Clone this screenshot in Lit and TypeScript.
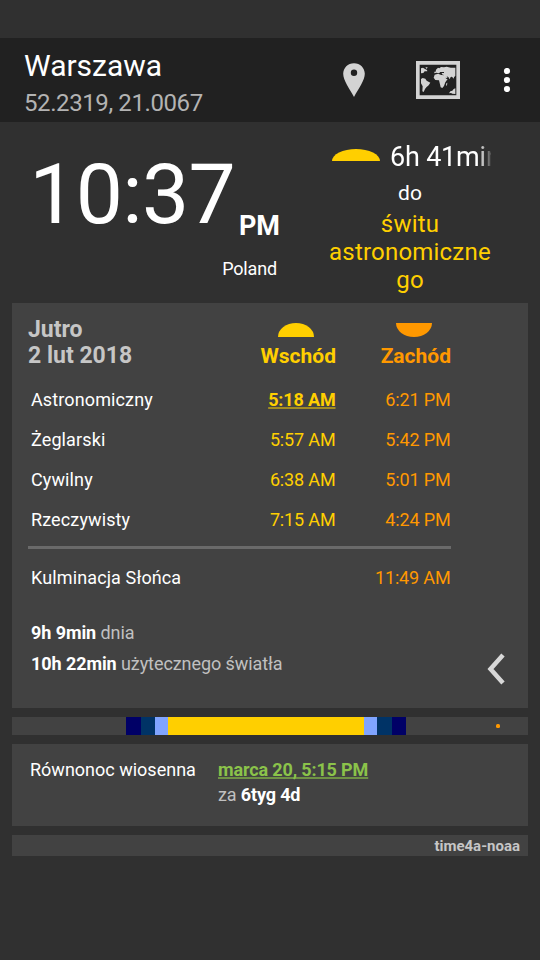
import { LitElement, html, css } from "lit";
import { customElement } from "lit/decorators.js";

const TWILIGHTS = [
  { name: "Astronomiczny", rise: "5:18 AM", set: "6:21 PM", next: true },
  { name: "Żeglarski", rise: "5:57 AM", set: "5:42 PM", next: false },
  { name: "Cywilny", rise: "6:38 AM", set: "5:01 PM", next: false },
  { name: "Rzeczywisty", rise: "7:15 AM", set: "4:24 PM", next: false },
];

const DAY_BANDS = [
  { width: 114, color: "transparent" },
  { width: 15, color: "#000066" },
  { width: 14, color: "#003366" },
  { width: 13, color: "#80a4ff" },
  { width: 196, color: "#ffcf00" },
  { width: 13, color: "#80a4ff" },
  { width: 15, color: "#003366" },
  { width: 14, color: "#000066" },
];

@customElement("app-root")
export class AppRoot extends LitElement {
  static styles = css`
    :host {
      display: flex;
      flex-direction: column;
      width: 540px;
      height: 960px;
      box-sizing: border-box;
      padding-top: 38px;
      background: #303030;
      color: #fff;
      font-family: Roboto, sans-serif;
      font-size: 18px;
      overflow: hidden;
    }
    svg { display: block; flex: none; }
    .header {
      display: flex;
      height: 84px;
      background: #212121;
      box-sizing: border-box;
      padding: 9px 29px 0 24px;
    }
    .place { flex: 1; }
    .city { font-size: 30px; line-height: 38px; }
    .coords { font-size: 24px; line-height: 36px; color: #b3b3b3; letter-spacing: -0.4px; }
    .actions { display: flex; height: 66px; align-items: center; }
    .pin { margin-right: 51px; }
    .map { margin-right: 43px; }
    .now { display: flex; height: 181px; }
    .clock { width: 280px; padding-top: 21px; box-sizing: border-box; }
    .time-line { display: flex; justify-content: flex-end; height: 102px; }
    .time { font-size: 84px; line-height: 103px; letter-spacing: -0.7px; }
    .ampm { font-size: 27px; font-weight: 700; line-height: 32px; margin: 67px 0 0 4px; }
    .zone { text-align: right; padding-right: 3px; margin-top: 14px; line-height: 20px; letter-spacing: -0.15px; }
    .countdown { margin-left: 49px; width: 162px; padding-top: 18px; text-align: center; }
    .left { display: flex; align-items: flex-start; height: 34px; padding-left: 3px; }
    .left svg { margin: 9px 10px 0 0; }
    .remaining {
      font-size: 27px;
      line-height: 35px;
      flex: 1;
      min-width: 0;
      overflow: hidden;
      white-space: nowrap;
      text-align: left;
      letter-spacing: -0.2px;
      mask-image: linear-gradient(to right, #000 calc(100% - 13px), rgba(0, 0, 0, 0.15));
    }
    .until { font-size: 21px; line-height: 38px; height: 36px; }
    .event { font-size: 24px; line-height: 28px; color: #ffcf00; overflow-wrap: anywhere; letter-spacing: 0.2px; }
    .card { background: #424242; margin: 0 12px 9px; box-sizing: border-box; }
    .sun { height: 405px; flex: none; padding: 13px 19px 0 16px; display: flex; flex-direction: column; }
    .table {
      display: grid;
      grid-template-columns: 1fr 110px 115px;
      width: 423px;
      text-align: right;
    }
    .date { font-size: 23px; font-weight: 700; line-height: 26px; color: #c6c6c6; text-align: left; height: 63px; padding-top: 1px; }
    .col { font-size: 21px; font-weight: 700; line-height: 26px; display: flex; flex-direction: column; align-items: flex-end; }
    .col svg { margin: 7px 22px 6px 0; }
    .col.down svg { margin-right: 19px; }
    .up { color: #ffcf00; }
    .down { color: #ff9800; }
    .name { text-align: left; padding-left: 3px; letter-spacing: 0.12px; }
    .cell { line-height: 40px; }
    .time-cell { letter-spacing: -0.15px; padding-right: 0.5px; }
    .next { font-weight: 700; }
    .next span { text-decoration: underline 2px #a18b22; text-underline-offset: 1px; text-decoration-skip-ink: none; }
    .rule { width: 423px; height: 3px; background: #6a6a6a; margin: 6px 0 9px; }
    .foot { display: flex; justify-content: space-between; padding: 15px 4px 0 3px; }
    .sums { line-height: 31px; color: #c0c0c0; margin-top: 4px; letter-spacing: -0.08px; }
    b { color: #fff; }
    .chev { margin-top: 40px; }
    .timeline { display: flex; height: 18px; flex: none; position: relative; }
    .dot { position: absolute; left: 484px; top: 7px; width: 4px; height: 4px; border-radius: 1.5px; background: #ff9800; }
    .season { display: flex; height: 82px; flex: none; padding: 13px 18px; line-height: 25px; color: #c0c0c0; }
    .season-name { width: 188px; color: #fff; }
    .season-when { letter-spacing: -0.14px; }
    .link { color: #8bc34a; font-weight: 700; text-decoration: underline 2px #6f9245; text-underline-offset: 1px; text-decoration-skip-ink: none; }
    .source { height: 21px; flex: none; padding-right: 8px; text-align: right; font-size: 15px; font-weight: 700; line-height: 22px; color: #c6c6c6; }
  `;

  render() {
    return html`
      <div class="header">
        <div class="place">
          <div class="city">Warszawa</div>
          <div class="coords">52.2319, 21.0067</div>
        </div>
        <div class="actions">
          <svg class="pin" width="22" height="34" viewBox="0 0 22 34">
            <path fill="#d3d3d3" fill-rule="evenodd" d="M11 0.2C4.8 0.2 0.2 4.9 0.2 10.8C0.2 17.5 6.5 25.5 11 34C15.500 25.500 21.800 17.500 21.800 10.800C21.800 4.900 17.200 0.200 11 0.200ZM11 6.500a3.200 3.200 0 1 1 0 6.400a3.200 3.200 0 0 1 0 -6.400Z" />
          </svg>
          <svg class="map" width="44" height="38" viewBox="0 0 132 114">
            <path fill="#d3d3d3" fill-rule="evenodd" d="M0 0H132V114H0ZM11 11V103H121V11Z" />
            <path fill="#d3d3d3" d="M15 22L21 20L27 24L33 27L34 31L26 31L22 36L15 37ZM28 19L35 19L32 24ZM15 54L20 51L28 53L32 59L43 65L38 73L31 79L27 84L23 93L19 91L20 76L15 67ZM55 32L59 32L60 26L66 20L70 22L75 18L84 19L92 17L104 20L118 20V44L114 49L113 53L108 47L104 48L101 55L97 48L91 45L95 49L90 52L85 43L78 40L77 36L84 36L84 33L73 33L69 37L61 35L55 37ZM56 41L66 38L76 42L86 43L90 53L95 54L88 64L84 75L79 81L74 79L71 66L69 58L58 57L53 50ZM91 67L94 65L93 73L90 74ZM99 97L103 91L109 89L113 84L118 82V99L109 98L105 96Z" />
          </svg>
          <svg width="8" height="24" viewBox="0 0 8 24">
            <circle cx="4" cy="3" r="3.100" fill="#fff" />
            <circle cx="4" cy="12" r="3.100" fill="#fff" />
            <circle cx="4" cy="21" r="3.100" fill="#fff" />
          </svg>
        </div>
      </div>

      <div class="now">
        <div class="clock">
          <div class="time-line">
            <div class="time">10:37</div>
            <div class="ampm">PM</div>
          </div>
          <div class="zone">Poland</div>
        </div>
        <div class="countdown">
          <div class="left">
            <svg width="48" height="12"><ellipse cx="24" cy="12" rx="24" ry="12" fill="#ffcf00" /></svg>
            <div class="remaining">6h 41min</div>
          </div>
          <div class="until">do</div>
          <div class="event">świtu astronomicznego</div>
        </div>
      </div>

      <div class="card sun">
        <div class="table">
          <div class="date">Jutro<br />2 lut 2018</div>
          <div class="col up">
            <svg width="36" height="14"><ellipse cx="18" cy="14" rx="18" ry="14" fill="#ffcf00" /></svg>
            Wschód
          </div>
          <div class="col down">
            <svg width="36" height="14"><ellipse cx="18" cy="0" rx="18" ry="14" fill="#ff9800" /></svg>
            Zachód
          </div>
          ${TWILIGHTS.map(
            (t) => html`
              <div class="cell name">${t.name}</div>
              <div class="cell time-cell up ${t.next ? "next" : ""}"><span>${t.rise}</span></div>
              <div class="cell time-cell down">${t.set}</div>
            `
          )}
        </div>
        <div class="rule"></div>
        <div class="table">
          <div class="cell name">Kulminacja Słońca</div>
          <div></div>
          <div class="cell time-cell down">11:49 AM</div>
        </div>
        <div class="foot">
          <div class="sums">
            <div><b>9h 9min</b> dnia</div>
            <div><b>10h 22min</b> użytecznego światła</div>
          </div>
          <svg class="chev" width="18" height="32" viewBox="0 0 18 32">
            <path d="M16 2L3.500 16L16 30" fill="none" stroke="#d8d8d8" stroke-width="4.500" />
          </svg>
        </div>
      </div>

      <div class="card timeline">
        ${DAY_BANDS.map((b) => html`<div style="width:${b.width}px;background:${b.color}"></div>`)}
        <div class="dot"></div>
      </div>

      <div class="card season">
        <div class="season-name">Równonoc wiosenna</div>
        <div class="season-when">
          <div><span class="link">marca 20, 5:15 PM</span></div>
          <div>za <b>6tyg 4d</b></div>
        </div>
      </div>

      <div class="card source">time4a-noaa</div>
    `;
  }
}
